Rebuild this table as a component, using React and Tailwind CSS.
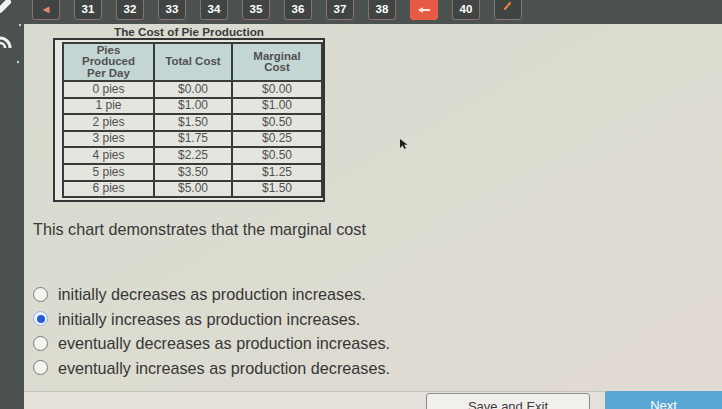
import React from "react";

const nums = ["31", "32", "33", "34", "35", "36", "37", "38"];

function NavBox({ children, className = "" }) {
  return (
    <div
      className={`-mt-[4px] flex h-[24px] w-[28px] shrink-0 items-center justify-center rounded-[3px] border-[1.5px] border-[#8a726c] bg-[#404543] pt-[3px] text-[11.5px] font-bold text-white ${className}`}
    >
      {children}
    </div>
  );
}

function Radio({ selected }) {
  if (selected) {
    return (
      <div className="flex h-[15px] w-[15px] shrink-0 items-center justify-center rounded-full border-[1.5px] border-[#93b4e6] bg-[#eef2fa]">
        <div className="h-[8px] w-[8px] rounded-full bg-[#2a5ad6]" />
      </div>
    );
  }
  return <div className="h-[15px] w-[15px] shrink-0 rounded-full border-[1.5px] border-[#7c7c78] bg-[#f3f3ef]" />;
}

const rows = [
  ["0 pies", "$0.00", "$0.00"],
  ["1 pie", "$1.00", "$1.00"],
  ["2 pies", "$1.50", "$0.50"],
  ["3 pies", "$1.75", "$0.25"],
  ["4 pies", "$2.25", "$0.50"],
  ["5 pies", "$3.50", "$1.25"],
  ["6 pies", "$5.00", "$1.50"],
];

const options = [
  ["initially decreases as production increases.", false],
  ["initially increases as production increases.", true],
  ["eventually decreases as production increases.", false],
  ["eventually increases as production decreases.", false],
];

export default function App() {
  return (
    <div
      className="relative flex h-[409px] w-[722px] overflow-hidden bg-[#4b5250]"
      style={{ fontFamily: '"Liberation Sans", Arial, sans-serif' }}
    >
      {/* left strip */}
      <div className="flex w-[24px] shrink-0 flex-col bg-[#4a5150]">
        <svg width="24" height="70" viewBox="0 0 24 70">
          <path d="M0 10 L8 2" stroke="#f2f2f0" strokeWidth="6" strokeLinecap="round" />
          <path d="M0 38 A10 10 0 0 1 10 48" stroke="#f2f2f0" strokeWidth="3" fill="none" />
          <path d="M0 43 A5 5 0 0 1 5 48" stroke="#f2f2f0" strokeWidth="2.5" fill="none" />
          <circle cx="20" cy="25" r="1.2" fill="#c9cdcb" />
          <circle cx="18" cy="62" r="1.2" fill="#c9cdcb" />
        </svg>
      </div>

      <div className="flex min-w-0 flex-1 flex-col">
        {/* top bar */}
        <div className="flex h-[24px] shrink-0 items-start gap-[14px] bg-[#4b5250] pl-[8px]">
          <NavBox>
            <span className="text-[8px] text-[#e48a6e]">◀</span>
          </NavBox>
          {nums.map((n) => (
            <NavBox key={n}>{n}</NavBox>
          ))}
          <NavBox className="border-[#e8604c] bg-[#e95a45]">
            <svg width="14" height="8" viewBox="0 0 14 8">
              <path d="M1 4 L6 1 L6 3 L13 3 L13 5 L6 5 L6 7 Z" fill="#fbe3dc" />
            </svg>
          </NavBox>
          <NavBox>40</NavBox>
          <NavBox>
            <svg width="10" height="10" viewBox="0 0 10 10" className="-mt-[8px]">
              <path d="M2 8 L7 2" stroke="#e8843f" strokeWidth="2" strokeLinecap="round" />
            </svg>
          </NavBox>
        </div>

        {/* content */}
        <div className="flex flex-1 flex-col bg-linear-to-br from-[#d8dbcf] via-[#dcdcd1] to-[#e2dad3]">
          <div className="ml-[29px] mt-[1px] flex h-[13px] w-[272px] items-center justify-center text-[11.7px] font-bold leading-none text-[#3b3b3b]">
            The Cost of Pie Production
          </div>

          {/* table frame */}
          <div className="ml-[29px] h-[164px] w-[272px] border-2 border-[#353535] bg-[#e7e8e2] pb-[3px] pl-[7px] pt-[2px]">
            <div className="grid grid-cols-[89px_76px_88px] grid-rows-[36px_repeat(7,14.6px)] gap-[2px] bg-[#3a3a3a] p-[2px] text-[12px] leading-[11.5px] text-[#505050]">
              <div className="flex flex-col items-center justify-center bg-[#c4d6d4] text-center text-[11.5px] font-bold">
                <span>Pies</span>
                <span>Produced</span>
                <span>Per Day</span>
              </div>
              <div className="flex items-center justify-center bg-[#c4d6d4] text-[11.5px] font-bold">Total Cost</div>
              <div className="flex flex-col items-center justify-center bg-[#c4d6d4] text-[11.5px] font-bold">
                <span>Marginal</span>
                <span>Cost</span>
              </div>
              {rows.map((r) =>
                r.map((c, i) => (
                  <div key={r[0] + i} className="flex items-center justify-center bg-[#e5e5e0]">
                    {c}
                  </div>
                ))
              )}
            </div>
          </div>

          <div className="ml-[9px] mt-[18px] h-[19px] text-[16.2px] leading-[19px] text-[#383838]">
            This chart demonstrates that the marginal cost
          </div>

          <div className="ml-[9px] mt-[46px] flex flex-col gap-[6.5px]">
            {options.map(([t, s]) => (
              <div key={t} className="flex h-[18px] items-center gap-[10px] text-[16.2px] leading-[18px] text-[#363636]">
                <Radio selected={s} />
                <span>{t}</span>
              </div>
            ))}
          </div>

          <div className="mt-[14px] h-[1.5px] bg-[#c2c2bb]" />

          <div className="flex flex-1 items-start bg-[#e3e1da] pl-[402px] pt-[1px]">
            <div className="flex h-[24px] w-[164px] items-start justify-center rounded-[3px] border border-[#8c8c88] bg-[#f1f0ec] pt-[6px] text-[13px] leading-none text-[#3c3c3c]">
              Save and Exit
            </div>
            <div className="-mt-[2px] ml-[15px] flex h-[26px] flex-1 items-start justify-center rounded-l-[2px] bg-[#5aa7d6] pt-[8px] text-[13px] leading-none text-white">
              Next
            </div>
          </div>
        </div>
      </div>

      {/* cursor */}
      <svg className="absolute left-[399px] top-[138px]" width="10" height="12" viewBox="0 0 10 12">
        <path d="M1 1 L1 10 L3.5 7.5 L5.5 11 L7 10 L5 6.8 L8.5 6.8 Z" fill="#1e1e1e" />
      </svg>
    </div>
  );
}
